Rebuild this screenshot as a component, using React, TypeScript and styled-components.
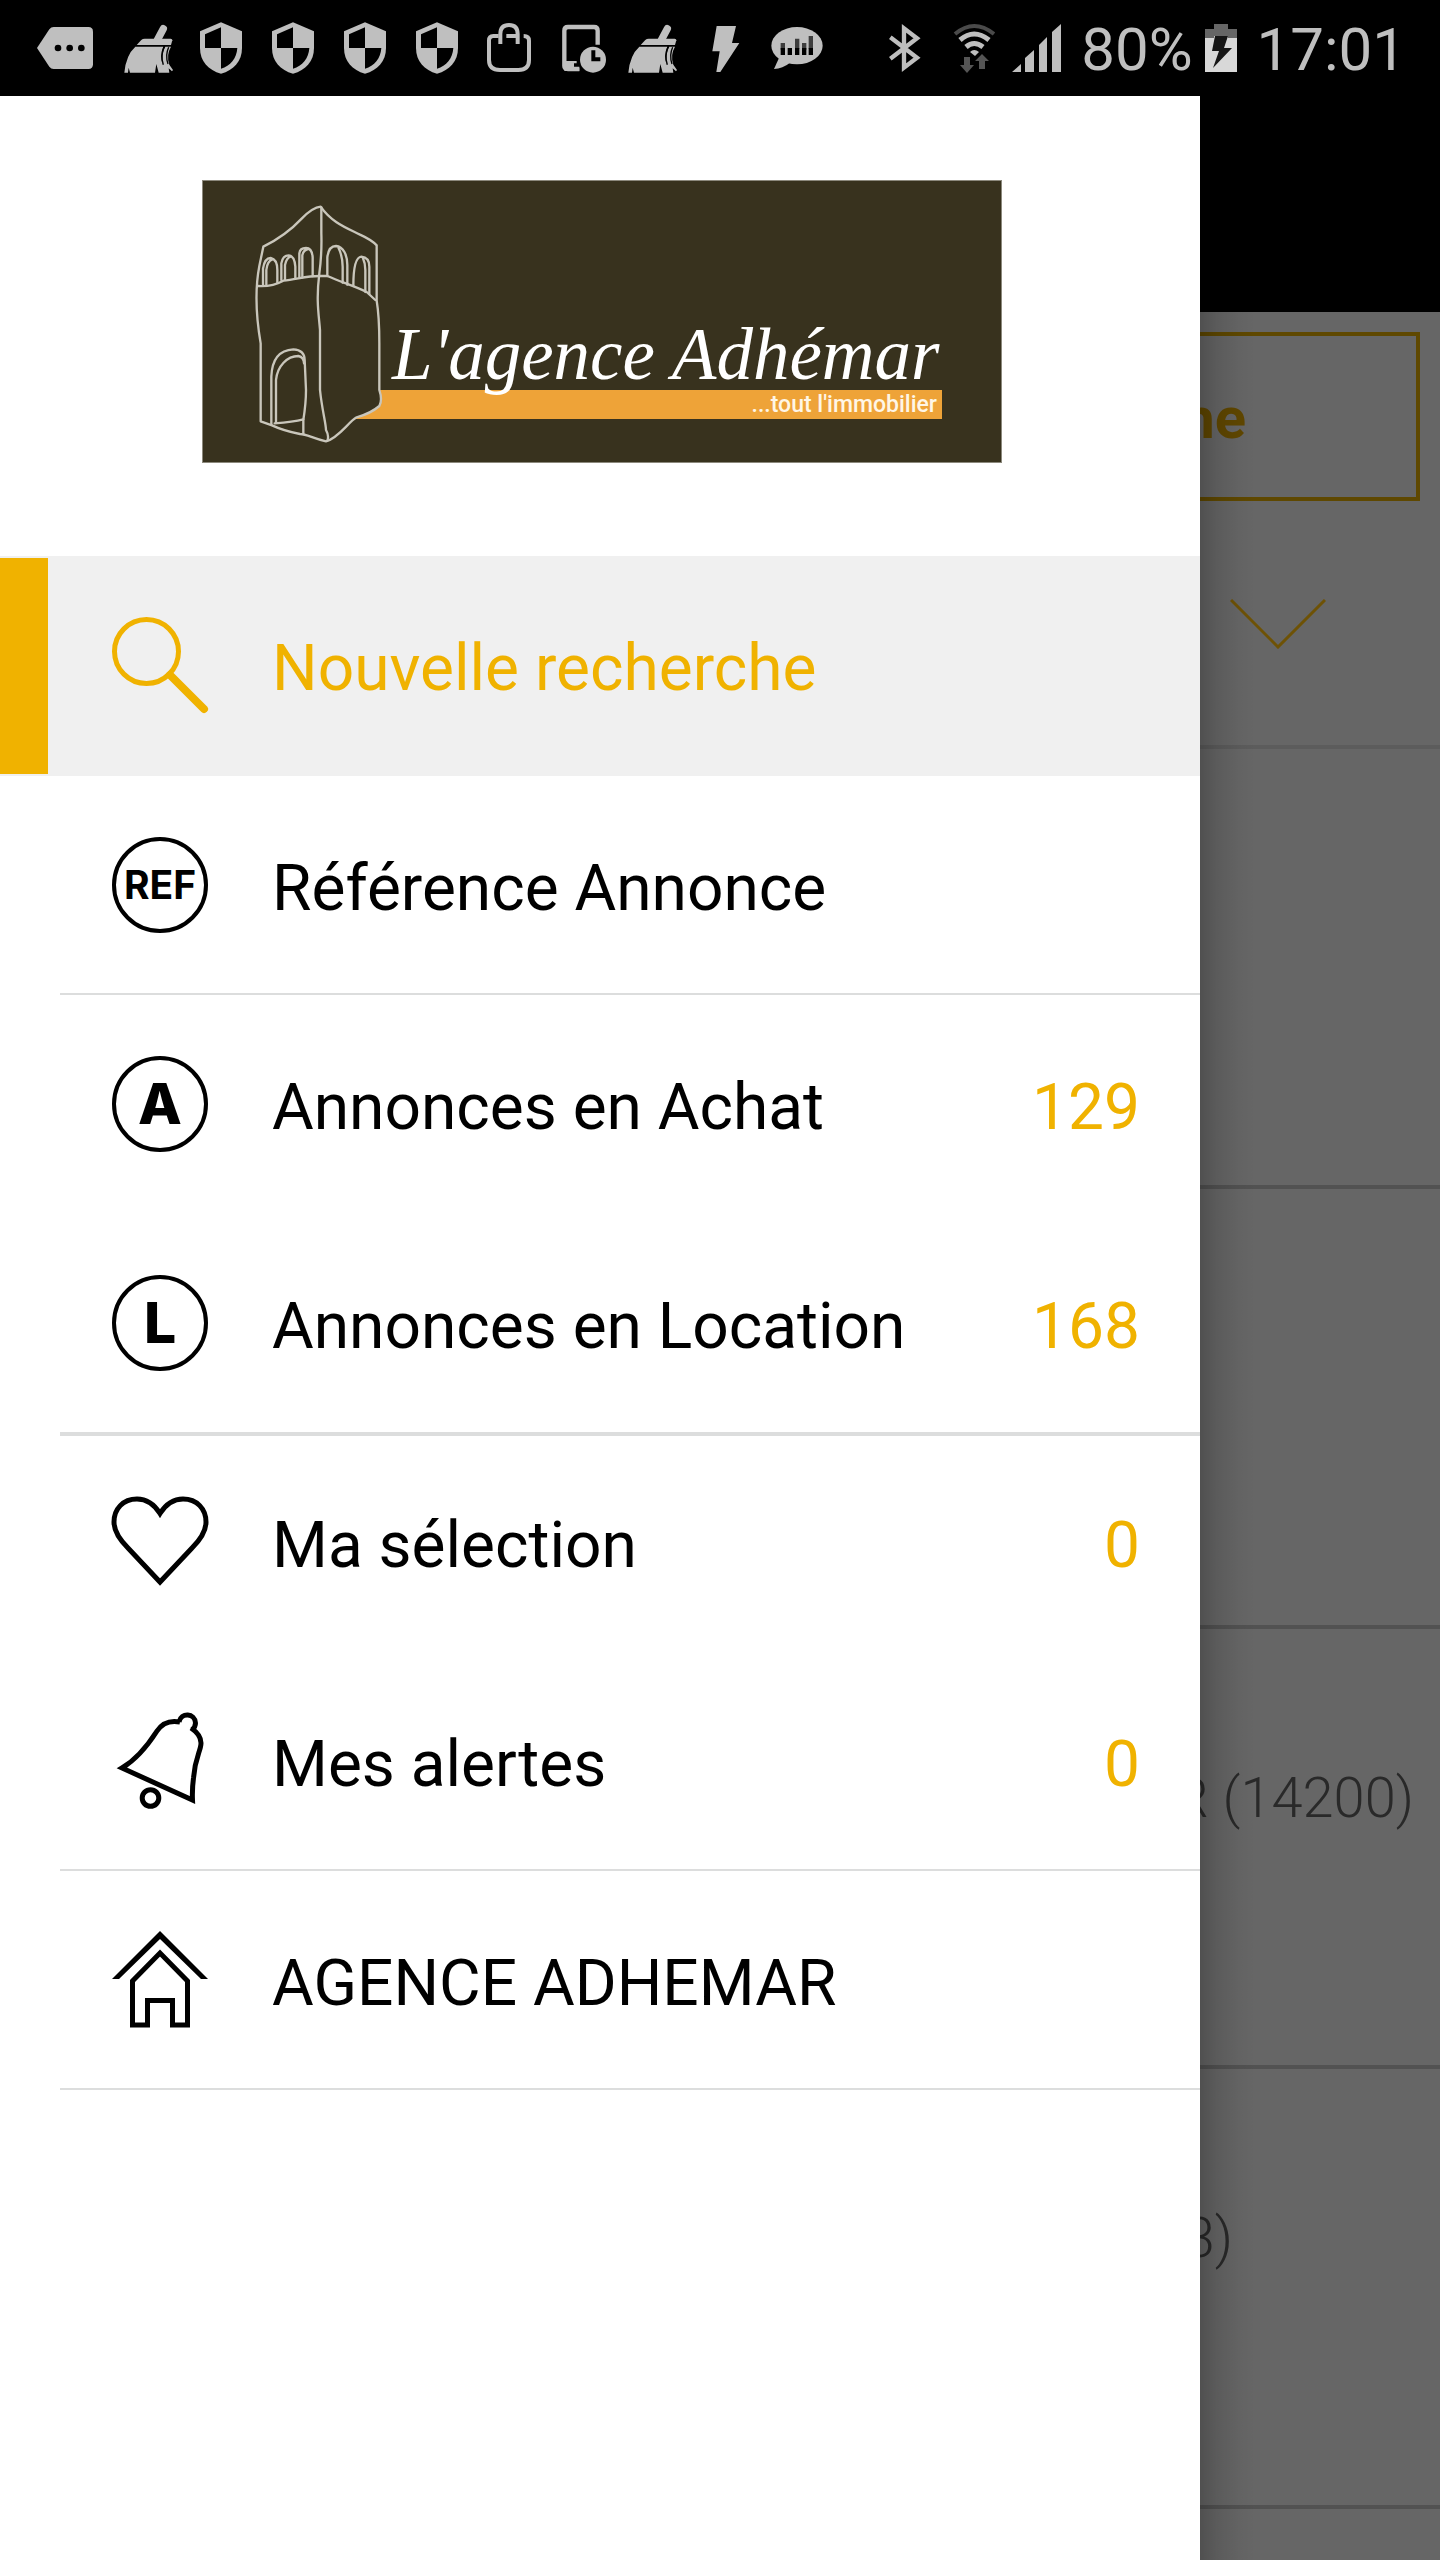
import React from "react";
import styled, { createGlobalStyle } from "styled-components";

const GOLD = "#f0b200";
const STATUS_GREY = "#bfbfbf";

const GlobalStyle = createGlobalStyle`
  *, *::before, *::after { box-sizing: border-box; }
  body { margin: 0; background: #000; font-family: Roboto, "Noto Sans", sans-serif; }
  button { font: inherit; }
`;

const Screen = styled.div`
  display: flex;
  flex-direction: column;
  min-height: 100vh;
`;

/* ---------- status bar ---------- */

const StatusBar = styled.header`
  display: flex;
  justify-content: space-between;
  height: 96px;
  padding: 0 34px 0 37px;
  background: #000;
  color: ${STATUS_GREY};
`;

const StatusGroup = styled.div`
  display: flex;
  align-items: center;
`;

const StatusText = styled.span<{ $before: number }>`
  margin-left: ${(p) => p.$before}px;
  padding-top: 4px;
  font-size: 60px;
  line-height: 72px;
`;

const Glyph = styled.svg<{ $before?: number }>`
  display: block;
  flex: none;
  margin-left: ${(p) => p.$before ?? 0}px;
  fill: ${STATUS_GREY};
`;

const Outline = styled.g<{ $width: number }>`
  fill: none;
  stroke: ${STATUS_GREY};
  stroke-width: ${(p) => p.$width};
`;

const TagGlyph = () => (
  <Glyph width="76" height="96" viewBox="111 0 228 288">
    <path d="M111 144 148 88Q153 81 161 81H265Q279 81 279 95V193Q279 207 265 207H161Q153 207 148 200Z" />
    <g fill="#000">
      <circle cx="174" cy="144" r="10" />
      <circle cx="209" cy="144" r="10" />
      <circle cx="244" cy="144" r="10" />
    </g>
  </Glyph>
);

const BroomGlyph = () => (
  <Glyph width="72" height="96" viewBox="339 0 216 288">
    <path d="M472 120 490 86" stroke={STATUS_GREY} strokeWidth="22" strokeLinecap="round" />
    <path d="M410 135 424 120Q428 116 434 116H512Q517 116 517 121L513 135Z" />
    <path d="M406 140H490Q478 165 488 195Q484 160 496 140H513Q498 165 508 194L519 210 516 214 506 205 508 218H476L469 192 465 218H390L386 203 384 218H373Q378 165 406 140Z" />
    <path d="M492 140Q481 168 490 194M506 142Q495 166 504 192" stroke="#000" strokeWidth="4" fill="none" />
  </Glyph>
);

const ShieldGlyph = () => (
  <Glyph width="72" height="96" viewBox="555 0 216 288">
    <path d="M663 67 726 94V144C726 184 701 211 663 221C625 211 600 184 600 144V94Z" />
    <path fill="#000" d="M663 82 615 103V144H663ZM663 144H712C710 176 691 198 663 206Z" />
  </Glyph>
);

const BagGlyph = () => (
  <Glyph width="72" height="96" viewBox="9 0 216 288">
    <Outline $width={12}>
      <path d="M86 108H70Q57 108 57 122V180Q57 210 90 210H145Q177 210 177 180V122Q177 108 161 108M109 108H138" />
      <path d="M91 132V102Q91 75 117 75Q143 75 143 102V132" />
    </Outline>
  </Glyph>
);

const PhoneClockGlyph = () => (
  <Glyph width="72" height="96" viewBox="225 0 216 288">
    <Outline $width={13}>
      <path d="M383 134V92Q383 81 372 81H294Q283 81 283 92V198Q283 207 294 207H328" />
    </Outline>
    <path d="M283 183H320V190H312V203H328V213H283Z" />
    <circle cx="369" cy="179" r="44" fill="#000" />
    <circle cx="369" cy="179" r="39" />
    <path d="M370 151V178H391" fill="none" stroke="#000" strokeWidth="12" />
  </Glyph>
);

const BoltGlyph = () => (
  <Glyph width="72" height="96" viewBox="657 0 216 288">
    <path d="M740 78H798L786 129H808L751 216H739L749 154H727Z" />
  </Glyph>
);

const ChatGlyph = () => (
  <Glyph width="72" height="96" viewBox="873 0 216 288">
    <ellipse cx="981" cy="137" rx="77" ry="56" />
    <path d="M928 172 912 207Q938 206 960 188Z" />
    <path fill="#3d3d3d" d="M932 129h13v20h-13zM975 116h13v30h-13zM996 129h13v20h-13zM1016 108h13v38h-13z" />
    <path fill="#000" d="M932 144h13v21h-13zM953 144h13v21h-13zM975 144h13v21h-13zM996 144h13v21h-13zM1016 144h13v21h-13z" />
  </Glyph>
);

const BluetoothGlyph = () => (
  <Glyph width="32" height="96" viewBox="1257 0 96 288">
    <Outline $width={13}>
      <path d="M1261 112 1341 173 1302 203V85L1341 115 1261 176" />
    </Outline>
  </Glyph>
);

const WifiGlyph = () => (
  <Glyph $before={32} width="42" height="96" viewBox="952 0 42 96">
    <path d="M954 34Q973 18 993 34" fill="none" stroke="#4a4a4a" strokeWidth="4" />
    <Outline $width={5}>
      <path d="M959 40Q973 28 988 40M965 47Q973 40 982 47" />
    </Outline>
    <path d="M969 52Q973 48 978 52L974 56Z" />
    <path fill="#555" d="M963 57H969V65H973L966 73 959 65H963ZM981 54 988 61H984V69H978V61H974Z" />
  </Glyph>
);

const SignalGlyph = () => (
  <Glyph $before={17} width="49" height="96" viewBox="1011 0 49 96">
    <path d="M1011 72 1020 64V72ZM1024 72V58L1033 50V72ZM1038 72V45L1046 37V72ZM1051 72V32L1060 24V72Z" />
  </Glyph>
);

const BatteryGlyph = () => (
  <Glyph $before={12} width="32" height="96" viewBox="1204 0 32 96">
    <path fill="#666" d="M1213 24H1227V29H1236V38H1204V29H1213Z" />
    <path fill="#d8d8d8" d="M1204 38H1213V36H1227V38H1236V72H1204Z" />
    <path fill="#161616" d="M1214 36H1227L1223 48H1231L1212 68 1218 51H1211Z" />
  </Glyph>
);

/* ---------- layout ---------- */

const Body = styled.div`
  display: flex;
  flex: 1;
`;

const Drawer = styled.aside`
  flex: 5;
  min-width: 0;
  background: #fff;
`;

const Brand = styled.div`
  display: flex;
  justify-content: center;
  padding: 84px 60px 93px 64px;
`;

const LogoArt = styled.svg`
  display: block;
  width: 100%;
  max-width: 800px;
`;

const Logo = () => (
  <LogoArt viewBox="0 0 800 283" role="img" aria-label="L'agence Adhémar, tout l'immobilier">
    <rect width="800" height="283" fill="#8c897d" />
    <rect x="1" y="1" width="798" height="281" fill="#38321e" />
    <rect x="150" y="210" width="590" height="29" fill="#eea338" />
    <svg width="800" height="283" viewBox="36 30 2400 849">
      <path
        d="M392 110C440 165 500 180 560 226V390Q568 450 568 660Q578 690 568 708C540 730 520 735 500 742C470 760 440 805 408 814L248 766 212 752V500C195 400 198 330 220 230C300 190 340 120 392 110Z"
        fill="#38321e"
      />
      <g fill="none" stroke="#c9c6bb" strokeWidth="7" strokeLinejoin="round" strokeLinecap="round">
        <path d="M220 230C275 203 305 178 335 146Q368 112 392 110C425 158 470 174 510 194Q545 210 560 226V392Q568 440 568 520V660Q578 690 568 708C545 728 525 735 500 742C475 756 445 805 408 814C370 806 350 792 330 792Q280 782 246 766L212 754V520C195 420 196 350 208 288Z" />
        <path d="M394 112V190Q396 250 388 310C378 390 386 430 390 480V660C396 720 408 760 408 780Q418 798 412 812" />
        <path d="M204 348C235 350 262 342 280 332C320 328 350 318 388 318H412C450 335 500 350 530 366L556 390" />
        <path d="M219 345V296Q224 264 242 264Q262 268 262 300V338M229 344V300Q232 272 248 268" />
        <path d="M274 330V280Q278 256 296 256Q314 258 316 290V326M285 330V285Q290 262 302 260" />
        <path d="M328 322V250Q330 234 348 234Q366 234 368 262V318M337 322V256Q340 240 354 237" />
        <path d="M412 318V262Q416 228 438 228C460 230 472 255 472 285V344M444 230Q458 258 458 290V338" />
        <path d="M490 348Q490 262 514 260Q538 262 538 290V372M518 262Q526 280 526 300V366" />
        <path d="M244 764V620C246 566 270 540 310 538Q344 540 344 570L348 660Q348 700 340 750V792" />
        <path d="M258 760V630C262 588 292 558 325 558Q342 562 342 580M254 760Q310 756 340 748" />
      </g>
    </svg>
    <text x="190" y="199" fill="#fff" fontFamily="'Liberation Serif', serif" fontStyle="italic" fontSize="73">
      L'agence Adhémar
    </text>
    <text x="735" y="232" fill="#fff6e6" textAnchor="end" fontFamily="Roboto, sans-serif" fontWeight="500" fontSize="23">
      ...tout l'immobilier
    </text>
  </LogoArt>
);

/* ---------- menu ---------- */

const Menu = styled.nav`
  display: flex;
  flex-direction: column;
`;

const MenuItem = styled.a<{ $active?: boolean }>`
  display: flex;
  align-items: center;
  height: ${(p) => (p.$active ? 220 : 219)}px;
  padding-right: 60px;
  background: ${(p) => (p.$active ? "#f0f0f0" : "#fff")};
  color: ${(p) => (p.$active ? GOLD : "#000")};
  font-size: 64px;
  line-height: 76px;
  text-decoration: none;
`;

const Marker = styled.span<{ $active?: boolean }>`
  flex: none;
  width: 48px;
  height: 216px;
  margin-right: 64px;
  background: ${(p) => (p.$active ? GOLD : "transparent")};
`;

const MenuLabel = styled.span`
  flex: 1;
  margin-left: 64px;
  padding-top: 6px;
`;

const Count = styled.span`
  padding-top: 6px;
  color: ${GOLD};
`;

const Divider = styled.hr<{ $thick?: boolean }>`
  flex: none;
  width: calc(100% - 60px);
  height: ${(p) => (p.$thick ? 4 : 2)}px;
  margin: ${(p) => (p.$thick ? "-1px 0 -3px 60px" : "-2px 0 0 60px")};
  border: 0;
  background: #dcdddd;
  z-index: 1;
`;

const Badge = styled.span<{ $small?: boolean }>`
  display: flex;
  flex: none;
  align-items: center;
  justify-content: center;
  width: 96px;
  height: 96px;
  margin-bottom: 2px;
  border: 4px solid #000;
  border-radius: 50%;
  font-family: Inter, sans-serif;
  font-size: ${(p) => (p.$small ? 39 : 57)}px;
  font-weight: ${(p) => (p.$small ? 700 : 800)};
  line-height: 1;
`;

const IconArt = styled.svg`
  display: block;
  flex: none;
  width: 96px;
  height: 96px;
  margin-bottom: 2px;
  overflow: visible;
  fill: none;
  stroke: currentColor;
  stroke-width: 5;
`;

const SearchIcon = () => (
  <IconArt viewBox="0 0 96 96">
    <circle cx="34.5" cy="34.5" r="32" />
    <path d="M58 58 92 92" strokeWidth="8" strokeLinecap="round" />
  </IconArt>
);

const HeartIcon = () => (
  <IconArt viewBox="0 0 96 96">
    <path d="M48 19.500C42 10 34 5 25 5C11 5 2 15 2 28C2 38 8 46 16 54L48 88 80 54C88 46 94 38 94 28C94 15 85 5 71 5C62 5 54 10 48 19.500Z" />
  </IconArt>
);

const BellIcon = () => (
  <IconArt viewBox="0 0 96 96">
    <path d="M79 15C85 19 89 25 89 30C89 38 83 44 81.500 65Q80 76 80.500 87L10 55C25 46 36 32 45 18Q53 6 68 9" />
    <path d="M67 9C69 -1 83 0 83.500 10Q83.500 14 80 17" />
    <circle cx="38.500" cy="85" r="8.300" />
  </IconArt>
);

const HomeIcon = () => (
  <IconArt viewBox="0 0 96 96">
    <path d="M48 -1 0 47H7L48 7 89 47H96Z" fill="currentColor" stroke="none" />
    <path d="M20.500 49 48 21 75.500 49V93H60.500V68.500H35.500V93H20.500Z" />
  </IconArt>
);

interface EntryProps {
  icon: React.ReactNode;
  label: string;
  count?: number;
  active?: boolean;
}

const Entry = ({ icon, label, count, active }: EntryProps) => (
  <MenuItem href="#" $active={active} aria-current={active ? "page" : undefined}>
    <Marker $active={active} />
    {icon}
    <MenuLabel>{label}</MenuLabel>
    {count !== undefined && <Count>{count}</Count>}
  </MenuItem>
);

/* ---------- dimmed page beside the drawer ---------- */

const Page = styled.main`
  position: relative;
  display: flex;
  flex: 1;
  flex-direction: column;
  min-width: 0;
  overflow: hidden;
  background: #666;

  /* shadow cast by the drawer */
  &::after {
    content: "";
    position: absolute;
    inset: 0 auto 0 0;
    width: 56px;
    pointer-events: none;
    background: linear-gradient(to right, rgba(0, 0, 0, 0.22), rgba(0, 0, 0, 0.11) 30%, rgba(0, 0, 0, 0.03) 70%, transparent);
  }
`;

const AppBar = styled.div`
  height: 216px;
  background: #000;
`;

const SearchButton = styled.button`
  display: flex;
  align-items: center;
  justify-content: flex-end;
  height: 169px;
  margin: 20px 20px 0 0;
  padding: 2px 170px 0 0;
  border: 4px solid #5f4800;
  border-left: 0;
  background: none;
  color: #604700;
  font-size: 58px;
  font-weight: 700;
  line-height: 68px;
`;

const ExpandButton = styled.button`
  display: flex;
  height: 248px;
  padding: 98px 0 0 30px;
  border: 0;
  border-bottom: 4px solid #5c5c5c;
  background: none;
`;

const Place = styled.div<{ $end?: number }>`
  display: flex;
  flex: none;
  justify-content: flex-end;
  height: 440px;
  padding-top: 136px;
  padding-right: ${(p) => p.$end ?? 0}px;
  border-bottom: 4px solid #525252;
  color: #292929;
  font-size: 56px;
  font-weight: 300;
  line-height: 66px;
  white-space: pre;
`;

export default function App() {
  return (
    <Screen>
      <GlobalStyle />
      <StatusBar>
        <StatusGroup>
          <TagGlyph />
          <BroomGlyph />
          <ShieldGlyph />
          <ShieldGlyph />
          <ShieldGlyph />
          <ShieldGlyph />
          <BagGlyph />
          <PhoneClockGlyph />
          <BroomGlyph />
          <BoltGlyph />
          <ChatGlyph />
        </StatusGroup>
        <StatusGroup>
          <BluetoothGlyph />
          <WifiGlyph />
          <SignalGlyph />
          <StatusText $before={20}>80%</StatusText>
          <BatteryGlyph />
          <StatusText $before={20}>17:01</StatusText>
        </StatusGroup>
      </StatusBar>
      <Body>
        <Drawer>
          <Brand>
            <Logo />
          </Brand>
          <Menu>
            <Entry active icon={<SearchIcon />} label="Nouvelle recherche" />
            <Entry icon={<Badge $small>REF</Badge>} label="Référence Annonce" />
            <Divider />
            <Entry icon={<Badge>A</Badge>} label="Annonces en Achat" count={129} />
            <Entry icon={<Badge>L</Badge>} label="Annonces en Location" count={168} />
            <Divider $thick />
            <Entry icon={<HeartIcon />} label="Ma sélection" count={0} />
            <Entry icon={<BellIcon />} label="Mes alertes" count={0} />
            <Divider />
            <Entry icon={<HomeIcon />} label="AGENCE ADHEMAR" />
            <Divider />
          </Menu>
        </Drawer>
        <Page>
          <AppBar />
          <SearchButton>he</SearchButton>
          <ExpandButton aria-label="Afficher plus">
            <svg width="96" height="50" viewBox="0 0 96 50" fill="none" stroke="#6e5205" strokeWidth="3">
              <path d="M1 1 48 48 95 1" />
            </svg>
          </ExpandButton>
          <Place />
          <Place />
          <Place $end={26}>R (14200)</Place>
          <Place $end={207}>3)</Place>
        </Page>
      </Body>
    </Screen>
  );
}
